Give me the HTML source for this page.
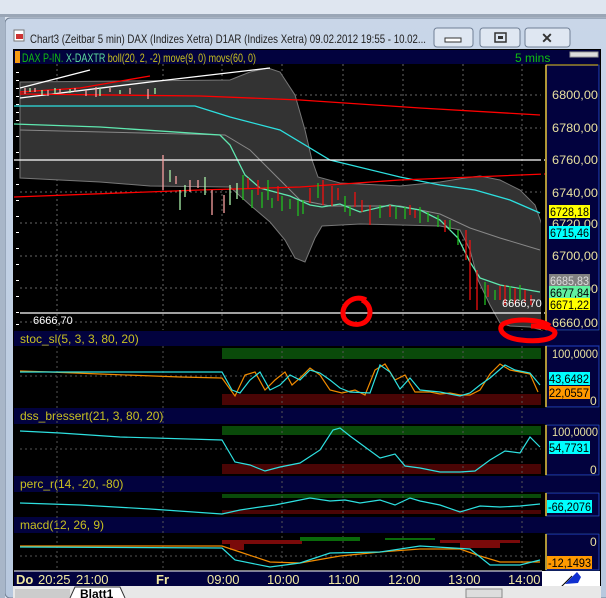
<!DOCTYPE html>
<html><head><meta charset="utf-8"><style>
body{margin:0;width:606px;height:598px;overflow:hidden;background:#dde5f0;font-family:"Liberation Sans",sans-serif}
svg{position:absolute;left:0;top:0}
</style></head><body>
<svg width="606" height="598" viewBox="0 0 606 598" font-family="Liberation Sans, sans-serif">
<defs><linearGradient id="fr" x1="0" y1="0" x2="0" y2="1"><stop offset="0" stop-color="#c9d6e8"/><stop offset="1" stop-color="#b7c8de"/></linearGradient></defs>
<rect width="606" height="598" fill="#dfe6f0"/>
<rect x="0" y="14" width="606" height="3" fill="#9aa6b6"/>
<rect x="5" y="18" width="606" height="580" rx="5" fill="url(#fr)" stroke="#6f7e92"/>
<rect x="0" y="17" width="5" height="581" fill="#a8b6c8"/>
<!-- title -->
<rect x="14" y="30" width="10" height="11" fill="#fff" stroke="#777"/><rect x="16" y="34" width="7" height="5" fill="#c33"/>
<text x="30" y="43" font-size="12" fill="#222" textLength="396" lengthAdjust="spacingAndGlyphs">Chart3 (Zeitbar 5 min)  DAX (Indizes Xetra) D1AR (Indizes Xetra) 09.02.2012 19:55 - 10.02...</text>
<g fill="#dfe7f2" stroke="#6f7f95"><rect x="434" y="28" width="39" height="19" rx="3"/><rect x="480" y="28" width="40" height="19" rx="3"/><rect x="525" y="28" width="45" height="19" rx="3"/></g>
<rect x="445" y="38" width="16" height="4" fill="#fff" stroke="#333"/>
<rect x="495" y="33" width="11" height="9" fill="none" stroke="#333" stroke-width="1.5"/><rect x="498" y="36" width="5" height="3" fill="#333"/>
<text x="547" y="43" font-size="14" fill="#333" text-anchor="middle" font-weight="bold">✕</text>
<!-- chart container -->
<rect x="13" y="49" width="588" height="549" fill="#000"/>
<rect x="14" y="50" width="586" height="14" fill="#02023e"/>
<rect x="15" y="51" width="5" height="12" fill="#f59a10"/>
<text x="22" y="62" font-size="12" textLength="234" lengthAdjust="spacingAndGlyphs"><tspan fill="#10c010">DAX P-IN. </tspan><tspan fill="#5fe0a0">X-DAXTR </tspan><tspan fill="#c8c020">boll(20, 2, -2) move(9, 0) movs(60, 0)</tspan></text>
<text x="515" y="62" font-size="12" fill="#10c010">5 mins</text>
<rect x="570" y="52" width="28" height="5" fill="#ddd" stroke="#999"/>
<!-- main plot -->
<g stroke="#666" stroke-dasharray="2,3" stroke-width="1">
<line x1="20" y1="95" x2="545" y2="95"/><line x1="20" y1="128" x2="545" y2="128"/><line x1="20" y1="192" x2="545" y2="192"/><line x1="20" y1="223" x2="545" y2="223"/><line x1="20" y1="256" x2="545" y2="256"/><line x1="20" y1="288" x2="545" y2="288"/><line x1="20" y1="322" x2="545" y2="322"/>
<line x1="57" y1="64" x2="57" y2="330"/><line x1="163" y1="64" x2="163" y2="330"/><line x1="222" y1="64" x2="222" y2="330"/><line x1="282" y1="64" x2="282" y2="330"/><line x1="343" y1="64" x2="343" y2="330"/><line x1="403" y1="64" x2="403" y2="330"/><line x1="463" y1="64" x2="463" y2="330"/><line x1="522" y1="64" x2="522" y2="330"/>
</g>
<path d="M20 82 L230 80 L250 72 L268 68 L280 72 L295 95 L305 130 L312 160 L318 177 L340 183 L400 186 L440 182 L465 178 L480 176 L500 180 L520 190 L535 205 L542 225 L542 330 L530 327 L510 326 L500 323 L490 305 L478 280 L470 250 L460 230 L440 226 L360 224 L322 226 L315 238 L305 262 L295 258 L285 240 L270 222 L250 205 L230 187 L150 186 L100 182 L20 178 Z" fill="#333" stroke="#777"/>
<polyline points="20,130 225,135 250,150 300,200 330,206 400,206 440,214 470,228 500,238 540,250" fill="none" stroke="#888"/>
<polyline points="14,106 195,106 230,117 280,130 330,160 400,177 440,185 475,190 510,200 540,213" fill="none" stroke="#2de0e0" stroke-width="1.3"/>
<polyline points="14,124 100,127 220,135 230,145 245,175 260,188 290,196 310,205 322,207 340,204 360,212 390,205 420,210 440,220 458,238 470,262 480,278 500,285 540,292" fill="none" stroke="#5fe8b0" stroke-width="1.3"/>
<polyline points="20,92 80,88 150,76" fill="none" stroke="#f00" stroke-width="1.3"/>
<polyline points="20,88 90,70" fill="none" stroke="#fff" stroke-width="1.3"/>
<polyline points="20,98 150,82 270,68" fill="none" stroke="#fff" stroke-width="1.3"/>
<polyline points="20,94 200,96 300,100 420,108 540,115" fill="none" stroke="#f00" stroke-width="1.3"/>
<polyline points="14,197 200,190 300,187 400,180 545,174" fill="none" stroke="#f00" stroke-width="1.3"/>
<line x1="14" y1="160" x2="545" y2="160" stroke="#fff" stroke-width="1.3"/>
<line x1="20" y1="313" x2="545" y2="313" stroke="#fff" stroke-width="1.3"/>
<!-- candles -->
<g stroke-width="1.3" fill="none">
<path stroke="#f9a0a0" d="M25 88v6M35 88v4M48 90v6M60 89v5M75 88v4M86 90v6M96 87v10M110 88v4M130 88v6M148 89v10M163 155v35M176 176v8M190 180v12M198 180v8M212 190v25M224 195v18"/>
<path stroke="#a8f0a8" d="M30 88v4M42 90v5M55 88v6M70 89v4M100 88v8M120 90v4M155 88v6M170 170v12M180 190v20M185 185v12M205 177v18M230 185v20M237 183v16"/>
<path stroke="#20c020" d="M243 175v25M252 190v18M262 192v16M268 180v20M272 198v10M282 196v15M290 199v10M298 200v16M303 200v14M318 183v15M345 196v16M350 206v10M380 205v13M396 207v12M405 207v12M420 207v16M428 212v10M438 215v12M450 220v10M458 230v15M485 282v23M495 290v10M510 286v16M520 285v15"/>
<path stroke="#f01010" d="M248 178v10M258 180v15M278 186v15M310 188v15M323 180v25M332 186v20M338 188v12M355 192v15M362 200v12M370 205v20M390 205v12M410 205v10M415 210v8M445 220v12M466 230v30M470 240v60M477 270v40M488 285v12M500 286v14M505 285v20M515 288v16M525 290v12M531 295v10"/>
</g>
<rect x="541" y="64" width="3" height="266" fill="#000"/>
<g fill="#fff"><rect x="16" y="72" width="3" height="1"/><rect x="16" y="80" width="3" height="1"/><rect x="16" y="88" width="3" height="1"/><rect x="16" y="96" width="3" height="1"/><rect x="16" y="104" width="3" height="1"/><rect x="16" y="112" width="3" height="1"/><rect x="16" y="120" width="3" height="1"/><rect x="16" y="136" width="3" height="1"/><rect x="16" y="152" width="3" height="1"/><rect x="16" y="168" width="3" height="1"/><rect x="16" y="184" width="3" height="1"/><rect x="16" y="200" width="3" height="1"/><rect x="16" y="216" width="3" height="1"/><rect x="16" y="232" width="3" height="1"/><rect x="16" y="248" width="3" height="1"/><rect x="16" y="264" width="3" height="1"/><rect x="16" y="280" width="3" height="1"/><rect x="16" y="296" width="3" height="1"/><rect x="16" y="312" width="3" height="1"/><rect x="16" y="324" width="3" height="1"/></g>
<text x="33" y="324" font-size="11" fill="#fff">6666,70</text>
<text x="502" y="307" font-size="11" fill="#fff">6666,70</text>
<!-- right axis main -->
<rect x="546" y="65" width="53" height="265" fill="#02023e" stroke="#2040c0"/>
<line x1="546" y1="65" x2="546" y2="330" stroke="#e8c840" stroke-width="1.5"/><line x1="546" y1="65" x2="598" y2="65" stroke="#e8c840"/>
<g font-size="12" fill="#e8e0a0"><text x="552" y="99" textLength="46" lengthAdjust="spacingAndGlyphs">6800,00</text><text x="552" y="132" textLength="46" lengthAdjust="spacingAndGlyphs">6780,00</text><text x="552" y="164" textLength="46" lengthAdjust="spacingAndGlyphs">6760,00</text><text x="552" y="197" textLength="46" lengthAdjust="spacingAndGlyphs">6740,00</text><text x="552" y="228" textLength="46" lengthAdjust="spacingAndGlyphs">6720,00</text><text x="552" y="260" textLength="46" lengthAdjust="spacingAndGlyphs">6700,00</text><text x="552" y="293" textLength="46" lengthAdjust="spacingAndGlyphs">6680,00</text><text x="552" y="327" textLength="46" lengthAdjust="spacingAndGlyphs">6660,00</text></g>
<rect x="549" y="205" width="41" height="13" fill="#ffff00"/><text x="550" y="216" font-size="12" fill="#000" textLength="39" lengthAdjust="spacingAndGlyphs">6728,18</text>
<rect x="549" y="226" width="41" height="13" fill="#00ffff"/><text x="550" y="237" font-size="12" fill="#000" textLength="39" lengthAdjust="spacingAndGlyphs">6715,46</text>
<rect x="549" y="274" width="41" height="12" fill="#808080"/><text x="550" y="285" font-size="12" fill="#ddd" textLength="39" lengthAdjust="spacingAndGlyphs">6685,83</text>
<rect x="549" y="286" width="41" height="12" fill="#60f0a0"/><text x="550" y="297" font-size="12" fill="#000" textLength="39" lengthAdjust="spacingAndGlyphs">6677,84</text>
<rect x="549" y="298" width="41" height="12" fill="#ffff00"/><text x="550" y="309" font-size="12" fill="#000" textLength="39" lengthAdjust="spacingAndGlyphs">6671,22</text>
<!-- sub panel labels -->
<rect x="14" y="331" width="586" height="15" fill="#02023e"/><text x="20" y="343" font-size="12" fill="#c8c020">stoc_sl(5, 3, 3, 80, 20)</text>
<rect x="14" y="408" width="586" height="16" fill="#02023e"/><text x="20" y="420" font-size="12" fill="#c8c020">dss_bressert(21, 3, 80, 20)</text>
<rect x="14" y="476" width="586" height="16" fill="#02023e"/><text x="20" y="488" font-size="12" fill="#c8c020">perc_r(14, -20, -80)</text>
<rect x="14" y="517" width="586" height="16" fill="#02023e"/><text x="20" y="529" font-size="12" fill="#c8c020">macd(12, 26, 9)</text>
<!-- bands -->
<rect x="222" y="348" width="319" height="11" fill="#0a4a0a"/><rect x="222" y="394" width="319" height="11" fill="#4a0505"/>
<rect x="222" y="426" width="319" height="9" fill="#0a4a0a"/><rect x="222" y="464" width="319" height="10" fill="#4a0505"/>
<rect x="222" y="494" width="319" height="4" fill="#0a4a0a"/><rect x="222" y="510" width="319" height="4" fill="#4a0505"/>
<g stroke="#555" stroke-dasharray="2,3"><line x1="20" y1="376" x2="541" y2="376"/><line x1="20" y1="449" x2="541" y2="449"/><line x1="20" y1="556" x2="541" y2="556"/>
<line x1="57" y1="346" x2="57" y2="570"/><line x1="163" y1="346" x2="163" y2="570"/><line x1="282" y1="346" x2="282" y2="570"/><line x1="343" y1="346" x2="343" y2="570"/><line x1="403" y1="346" x2="403" y2="570"/><line x1="463" y1="346" x2="463" y2="570"/><line x1="522" y1="346" x2="522" y2="570"/></g>
<!-- stoc -->
<polyline points="20,371 50,372 100,374 180,377 222,378 235,396 245,375 255,372 265,390 275,380 285,372 292,385 300,378 310,368 320,375 330,390 342,393 355,390 365,395 375,370 385,364 395,380 405,375 415,392 430,392 440,394 450,393 460,395 470,395 480,390 490,374 500,364 510,370 520,372 530,374 538,392" fill="none" stroke="#f08a00" stroke-width="1.2"/>
<polyline points="20,372 100,372 222,372 232,390 240,393 250,380 260,372 270,390 280,385 290,375 300,380 310,370 320,373 330,380 340,388 350,392 370,393 380,365 390,372 400,389 410,378 420,390 440,392 460,396 470,393 480,385 490,378 505,365 515,370 530,373 540,385" fill="none" stroke="#2de0e0" stroke-width="1.2"/>
<!-- dss -->
<polyline points="20,431 60,433 120,437 222,440 235,462 250,465 265,471 280,467 300,463 320,450 333,430 340,428 350,436 365,447 380,458 395,454 405,466 420,468 440,472 460,472 475,471 490,460 505,451 520,453 530,437 540,447" fill="none" stroke="#2de0e0" stroke-width="1.2"/>
<!-- perc -->
<polyline points="20,503 80,505 150,509 222,514 240,510 260,507 275,505 290,502 300,500 310,498 330,501 345,500 360,503 380,500 395,505 410,498 420,501 440,505 460,512 480,506 500,507 520,506 540,504" fill="none" stroke="#2de0e0" stroke-width="1.2"/>
<!-- macd -->
<g fill="#7a0a0a"><rect x="222" y="540" width="80" height="4"/><rect x="230" y="540" width="14" height="10"/><rect x="440" y="540" width="80" height="3"/><rect x="460" y="540" width="40" height="8"/></g>
<g fill="#0a6a0a"><rect x="300" y="537" width="60" height="4"/><rect x="385" y="538" width="50" height="2"/></g>
<polyline points="20,546 222,546 240,552 270,562 300,563 340,556 380,552 420,549 460,549 480,556 500,562 540,562" fill="none" stroke="#f08a00" stroke-width="1.2"/>
<polyline points="20,547 222,548 235,560 270,567 300,563 330,553 380,552 420,546 470,549 490,565 520,565 540,560" fill="none" stroke="#2de0e0" stroke-width="1.2"/>
<!-- sub axes -->
<g fill="#02023e" stroke="#2040c0"><rect x="546" y="346" width="53" height="61"/><rect x="546" y="425" width="53" height="50"/><rect x="546" y="493" width="53" height="23"/><rect x="546" y="534" width="53" height="36"/></g>
<g stroke="#e8c840" stroke-width="1.5"><line x1="546" y1="346" x2="546" y2="407"/><line x1="546" y1="425" x2="546" y2="475"/><line x1="546" y1="493" x2="546" y2="516"/><line x1="546" y1="534" x2="546" y2="570"/></g>
<g font-size="12" fill="#e8e0a0"><text x="552" y="358" textLength="46" lengthAdjust="spacingAndGlyphs">100,0000</text><text x="590" y="405">0</text><text x="552" y="436" textLength="46" lengthAdjust="spacingAndGlyphs">100,0000</text><text x="590" y="474">0</text><text x="590" y="546">0</text></g>
<rect x="549" y="372" width="41" height="13" fill="#00ffff"/><text x="549" y="383" font-size="12" fill="#000" textLength="40" lengthAdjust="spacingAndGlyphs">43,6482</text>
<rect x="549" y="386" width="41" height="13" fill="#ff9900"/><text x="549" y="397" font-size="12" fill="#000" textLength="40" lengthAdjust="spacingAndGlyphs">22,0557</text>
<rect x="549" y="441" width="41" height="13" fill="#00ffff"/><text x="549" y="452" font-size="12" fill="#000" textLength="40" lengthAdjust="spacingAndGlyphs">54,7731</text>
<rect x="547" y="500" width="45" height="13" fill="#00ffff"/><text x="548" y="511" font-size="12" fill="#000" textLength="43" lengthAdjust="spacingAndGlyphs">-66,2076</text>
<rect x="547" y="556" width="45" height="13" fill="#ff9900"/><text x="548" y="567" font-size="12" fill="#000" textLength="43" lengthAdjust="spacingAndGlyphs">-12,1493</text>
<!-- red annotations -->
<path d="M366 300c-12-6-24 4-23 14 1 10 14 13 22 8 8-6 6-18-3-22" fill="none" stroke="#f00" stroke-width="5"/>
<path d="M550 326c-10-7-36-8-47-2-6 5 0 14 18 16 16 2 33 0 34-7 0-5-14-7-24-7" fill="none" stroke="#f00" stroke-width="5"/>
<!-- time axis -->
<rect x="14" y="571" width="528" height="15" fill="#02023e"/><line x1="14" y1="571" x2="542" y2="571" stroke="#fff"/>
<rect x="542" y="571" width="58" height="15" fill="#fff"/>
<path d="M565 584l12-12 4 5-3 6z" fill="#1030d0"/><line x1="560" y1="588" x2="572" y2="576" stroke="#000"/>
<g font-size="13" fill="#f0e8a0"><text x="16" y="584" font-weight="bold">Do</text><text x="38" y="584">20:25</text><text x="76" y="584">21:00</text><text x="156" y="584" font-weight="bold">Fr</text><text x="207" y="584">09:00</text><text x="267" y="584">10:00</text><text x="328" y="584">11:00</text><text x="388" y="584">12:00</text><text x="448" y="584">13:00</text><text x="508" y="584">14:00</text></g>
<!-- tabs -->
<rect x="13" y="586" width="588" height="12" fill="#e8e8e8"/>
<rect x="15" y="589" width="55" height="9" fill="#ccc"/>
<path d="M70 598l5-11h45l5 11" fill="#fff" stroke="#333"/><text x="80" y="598" font-size="12" font-weight="bold" fill="#000">Blatt1</text>
<rect x="466" y="589" width="36" height="9" fill="#ddd" stroke="#888"/>
</svg>
</body></html>
